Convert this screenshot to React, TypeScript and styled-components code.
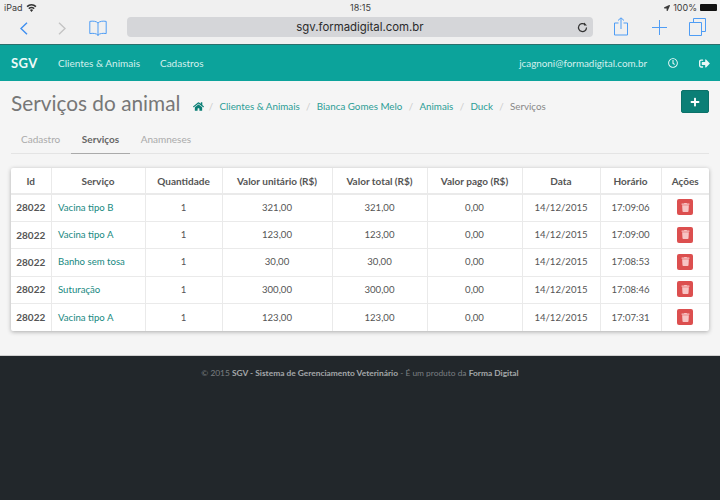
import styled, { createGlobalStyle } from 'styled-components';
import { FaHome, FaPlus, FaTrash, FaSignOutAlt, FaRegClock, FaLocationArrow } from 'react-icons/fa';

const GlobalStyle = createGlobalStyle`
  html, body {
    margin: 0;
    padding: 0;
    background: #f5f5f5;
    font-family: Lato, "Open Sans", sans-serif;
    overflow: hidden;
  }
  * { box-sizing: border-box; }
`;

const Page = styled.div`
  width: 720px;
  height: 500px;
  display: flex;
  flex-direction: column;
  overflow: hidden;
`;

const Chrome = styled.div`
  height: 45px;
  background: #f0f0f0;
  border-bottom: 1px solid #2c6f6c;
  flex: none;
`;

const StatusBar = styled.div`
  height: 15px;
  padding: 0 3px 0 4px;
  display: flex;
  align-items: center;
  justify-content: space-between;
  font-family: Inter, "Liberation Sans", sans-serif;
  font-size: 9px;
  color: #3c3c3c;
`;

const StatusSide = styled.div<{ $end?: boolean }>`
  width: 120px;
  display: flex;
  align-items: center;
  gap: 3px;
  justify-content: ${(props) => (props.$end ? 'flex-end' : 'flex-start')};
`;

const Battery = styled.span`
  width: 17px;
  height: 7px;
  background: #111;
  border-radius: 1px;
`;

const Toolbar = styled.div`
  height: 29px;
  padding: 2px 0 0 20px;
  display: flex;
  align-items: flex-start;
`;

const ToolIcon = styled.svg<{ $right?: number; $top?: number }>`
  flex: none;
  fill: none;
  stroke: #4f9df5;
  stroke-width: 1;
  margin-right: ${(props) => props.$right ?? 0}px;
  margin-top: ${(props) => props.$top ?? 0}px;
`;

const ArrowIcon = styled(ToolIcon)<{ $muted?: boolean }>`
  stroke: ${(props) => (props.$muted ? '#c4c4c4' : '#3f8ff0')};
  stroke-width: 1.4;
`;

const AddressBar = styled.div`
  width: 466px;
  height: 20px;
  margin-right: 21px;
  padding-right: 5px;
  background: #d5d6d9;
  border-radius: 4px;
  display: flex;
  align-items: center;
  font-family: Inter, "Liberation Sans", sans-serif;
  font-size: 11.4px;
  color: #2b2b2b;
`;

const Url = styled.span`
  flex: 1;
  text-align: center;
  padding-left: 16px;
`;

const Navbar = styled.nav`
  height: 36px;
  flex: none;
  background: #0ca39b;
  padding: 0 10px 0 11px;
  display: flex;
  align-items: center;
  font-size: 10px;
  color: #d4f0ee;
`;

const Brand = styled.span`
  font-size: 13px;
  font-weight: 700;
  letter-spacing: 0.4px;
  color: #eefaf9;
  width: 47px;
`;

const NavLink = styled.span`
  margin-right: 20px;
`;

const NavEnd = styled.div`
  margin-left: auto;
  display: flex;
  align-items: center;
  color: #e8f7f6;
`;

const Email = styled.span`
  margin-right: 21px;
  font-size: 9.85px;
  color: #d4f0ee;
`;

const ClockIcon = styled(FaRegClock)`
  margin-right: 21px;
`;

const Content = styled.main`
  flex: 1;
  padding: 9px 11px 0 11px;
`;

const Header = styled.div`
  height: 28px;
  display: flex;
  align-items: center;
`;

const Title = styled.h1`
  margin: -3px 13px 0 0;
  font-size: 20.8px;
  font-weight: 400;
  color: #777;
  white-space: nowrap;
`;

const Crumbs = styled.div`
  display: flex;
  align-items: center;
  font-size: 9.8px;
  padding-top: 4px;
  color: #888;
`;

const CrumbLink = styled.span`
  color: #2b9d95;
  display: flex;
  align-items: center;
`;

const HomeLink = styled(CrumbLink)`
  color: #0b7f76;
  margin-right: -2px;
`;

const CrumbSep = styled.span`
  color: #ccc;
  margin: 0 6.3px;
`;

const AddButton = styled.button`
  margin: -5px 0 0 auto;
  width: 28px;
  height: 23px;
  padding: 0;
  border: 1px solid #0b7169;
  border-radius: 2px;
  background: #0b7f76;
  color: #fff;
  display: flex;
  align-items: center;
  justify-content: center;
`;

const Tabs = styled.div`
  margin-top: 12px;
  height: 24px;
  border-bottom: 1px solid #e4e4e4;
  display: flex;
`;

const Tab = styled.div<{ $active?: boolean }>`
  height: 24px;
  padding: 0 10.8px;
  font-size: 10px;
  line-height: 19px;
  font-weight: ${(props) => (props.$active ? 700 : 400)};
  color: ${(props) => (props.$active ? '#666' : '#aaa')};
  border-bottom: 1px solid ${(props) => (props.$active ? '#aaa' : 'transparent')};
  &:first-child { margin-left: -0.8px; }
`;

const Card = styled.div`
  margin-top: 14px;
  background: #fff;
  border-radius: 2px;
  box-shadow: 0 1px 4px rgba(0, 0, 0, 0.3);
`;

const Table = styled.table`
  width: 698px;
  table-layout: fixed;
  border-collapse: collapse;
  font-size: 9.6px;
  color: #555;
`;

const Th = styled.th`
  height: 26px;
  padding: 0;
  font-size: 10px;
  font-weight: 700;
  color: #555;
  text-align: center;
  border-right: 1px solid #eaeaea;
  border-bottom: 2px solid #eaeaea;
  &:last-child { border-right: 0; }
`;

const Td = styled.td`
  height: 27.4px;
  padding: 0 0 1px;
  text-align: center;
  border-right: 1px solid #eaeaea;
  border-bottom: 1px solid #eaeaea;
  &:last-child { border-right: 0; }
  tr:last-child & { border-bottom: 0; }
`;

const IdCell = styled(Td)`
  font-size: 10px;
  font-weight: 700;
`;

const ServiceCell = styled(Td)`
  text-align: left;
  padding-left: 6.5px;
  color: #17897f;
`;

const DeleteButton = styled.button`
  width: 16px;
  height: 16px;
  padding: 0;
  border: 0;
  border-radius: 2px;
  background: #dc4f4f;
  color: #f7c4c4;
  display: inline-flex;
  align-items: center;
  justify-content: center;
  vertical-align: middle;
`;

const Footer = styled.footer`
  height: 145px;
  flex: none;
  background: #22272b;
  border-top: 1px solid #d0d0d0;
  padding-top: 12px;
  text-align: center;
  font-size: 8.4px;
  color: #7b7f82;
`;

const FooterStrong = styled.strong`
  color: #a5a8aa;
`;

const columns = [40, 94, 77, 110, 95, 95, 78, 61, 48];
const headers = ['Id', 'Serviço', 'Quantidade', 'Valor unitário (R$)', 'Valor total (R$)', 'Valor pago (R$)', 'Data', 'Horário', 'Ações'];
const rows = [
  { service: 'Vacina tipo B', price: '321,00', time: '17:09:06' },
  { service: 'Vacina tipo A', price: '123,00', time: '17:09:00' },
  { service: 'Banho sem tosa', price: '30,00', time: '17:08:53' },
  { service: 'Suturação', price: '300,00', time: '17:08:46' },
  { service: 'Vacina tipo A', price: '123,00', time: '17:07:31' },
];

const App = () => (
  <Page>
    <GlobalStyle />
    <Chrome>
      <StatusBar>
        <StatusSide>
          iPad
          <svg width="11" height="8" viewBox="0 0 11 8" fill="#333">
            <path d="M5.5 8 3.9 6a2.4 2.4 0 0 1 3.2 0zM3.2 5.2 2.3 4a5 5 0 0 1 6.4 0l-.9 1.2a3.5 3.5 0 0 0-4.6 0zM1.6 3.2.5 1.9a7.8 7.8 0 0 1 10 0L9.4 3.2a6.2 6.2 0 0 0-7.8 0z" />
          </svg>
        </StatusSide>
        <span>18:15</span>
        <StatusSide $end>
          <FaLocationArrow size={6} />
          <span>100%</span>
          <Battery />
        </StatusSide>
      </StatusBar>
      <Toolbar>
        <ArrowIcon width="8" height="13" viewBox="0 0 8 13" $right={30} $top={5}>
          <path d="M7 .7 1 6.5l6 5.8" />
        </ArrowIcon>
        <ArrowIcon width="8" height="13" viewBox="0 0 8 13" $muted $right={23} $top={5}>
          <path d="m1 .7 6 5.8-6 5.8" />
        </ArrowIcon>
        <ToolIcon width="18" height="17" viewBox="0 0 18 17" $right={20} $top={3}>
          <path d="M9 3C7.6 1.2 3.800.8.8 1.400v12.200c3-.6 6.800-.2 8.200 1.500 1.400-1.700 5.200-2.100 8.200-1.500V1.400C14.200.8 10.400 1.200 9 3zm0 0v13" />
        </ToolIcon>
        <AddressBar>
          <Url>sgv.formadigital.com.br</Url>
          <svg width="11" height="11" viewBox="0 0 11 11" fill="none" stroke="#333" strokeWidth="1.2">
            <path d="M9.500 5.500a4 4 0 1 1-1.400-3" />
            <path d="M7 .4v3h3" fill="#333" stroke="none" />
          </svg>
        </AddressBar>
        <ToolIcon width="14" height="19" viewBox="0 0 14 19" $right={24}>
          <path d="M4.500 6H.5v12h13V6h-4M7 12V1M4 3.500 7 .8l3 2.700" />
        </ToolIcon>
        <ToolIcon width="15" height="15" viewBox="0 0 15 15" $right={22} $top={3}>
          <path d="M7.500 0v15M0 7.500h15" />
        </ToolIcon>
        <ToolIcon width="17" height="18" viewBox="0 0 17 18" $top={1}>
          <path d="M.5 4.500h12v13H.5zM4.500 4.500V.5h12v13h-4" />
        </ToolIcon>
      </Toolbar>
    </Chrome>

    <Navbar>
      <Brand>SGV</Brand>
      <NavLink>Clientes &amp; Animais</NavLink>
      <NavLink>Cadastros</NavLink>
      <NavEnd>
        <Email>jcagnoni@formadigital.com.br</Email>
        <ClockIcon size={10} />
        <FaSignOutAlt size={11} />
      </NavEnd>
    </Navbar>

    <Content>
      <Header>
        <Title>Serviços do animal</Title>
        <Crumbs>
          <HomeLink><FaHome size={11} /></HomeLink>
          <CrumbSep>/</CrumbSep>
          <CrumbLink>Clientes &amp; Animais</CrumbLink>
          <CrumbSep>/</CrumbSep>
          <CrumbLink>Bianca Gomes Melo</CrumbLink>
          <CrumbSep>/</CrumbSep>
          <CrumbLink>Animais</CrumbLink>
          <CrumbSep>/</CrumbSep>
          <CrumbLink>Duck</CrumbLink>
          <CrumbSep>/</CrumbSep>
          <span>Serviços</span>
        </Crumbs>
        <AddButton><FaPlus size={10} /></AddButton>
      </Header>

      <Tabs>
        <Tab>Cadastro</Tab>
        <Tab $active>Serviços</Tab>
        <Tab>Anamneses</Tab>
      </Tabs>

      <Card>
        <Table>
          <colgroup>
            {columns.map((width, i) => <col key={i} width={width} />)}
          </colgroup>
          <thead>
            <tr>{headers.map((h) => <Th key={h}>{h}</Th>)}</tr>
          </thead>
          <tbody>
            {rows.map((row, i) => (
              <tr key={i}>
                <IdCell>28022</IdCell>
                <ServiceCell>{row.service}</ServiceCell>
                <Td>1</Td>
                <Td>{row.price}</Td>
                <Td>{row.price}</Td>
                <Td>0,00</Td>
                <Td>14/12/2015</Td>
                <Td>{row.time}</Td>
                <Td><DeleteButton><FaTrash size={9} /></DeleteButton></Td>
              </tr>
            ))}
          </tbody>
        </Table>
      </Card>
    </Content>

    <Footer>
      © 2015 <FooterStrong>SGV - Sistema de Gerenciamento Veterinário</FooterStrong> - É um produto da <FooterStrong>Forma Digital</FooterStrong>
    </Footer>
  </Page>
);

export default App;
